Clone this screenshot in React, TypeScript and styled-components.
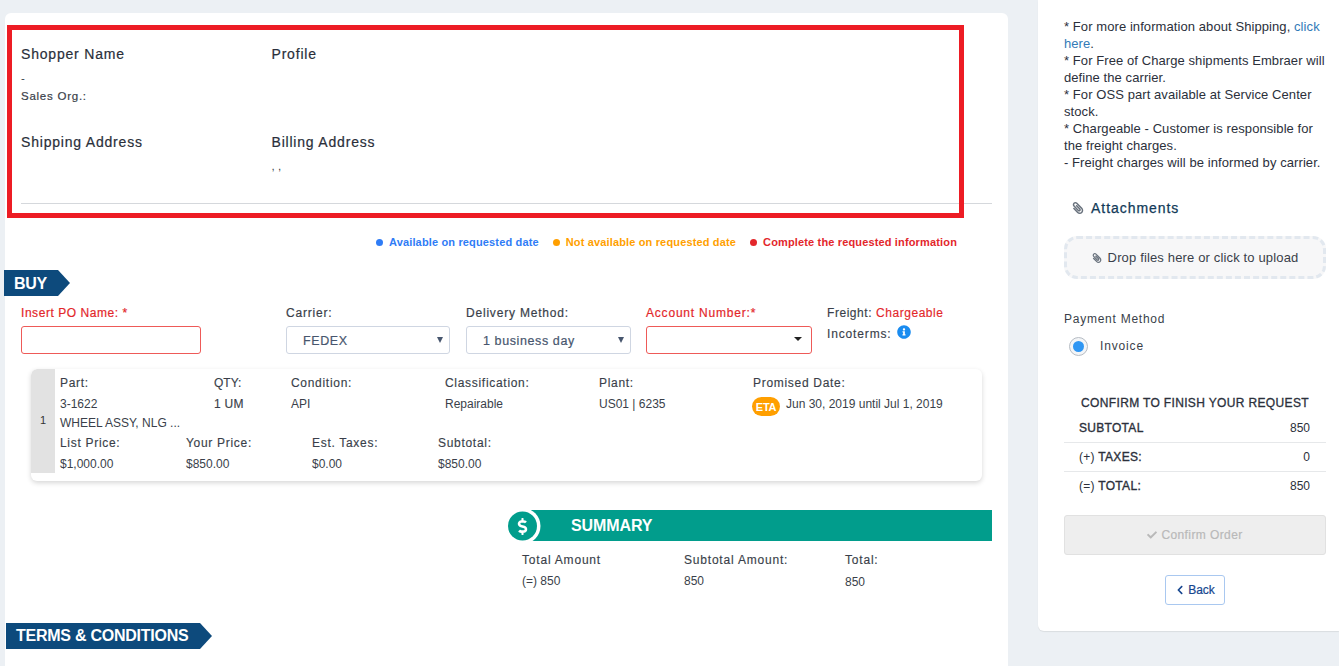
import React from 'react'
import styled, { createGlobalStyle } from 'styled-components'
import { FaCheck, FaChevronLeft, FaDollarSign, FaInfoCircle, FaPaperclip } from 'react-icons/fa'

const GlobalStyle = createGlobalStyle`
  html, body {
    margin: 0;
    padding: 0;
    height: 666px;
    overflow: hidden;
    background: #ecf0f4;
    font-family: "Liberation Sans", Arial, sans-serif;
    color: #2b303b;
  }
  * { box-sizing: border-box; }
`

const Page = styled.div`
  display: flex;
  align-items: flex-start;
  height: 666px;
  overflow: hidden;
  padding-left: 5px;
`

const MainCard = styled.main`
  position: relative;
  width: 1003px;
  height: 653px;
  margin-top: 13px;
  flex-shrink: 0;
  background: #fff;
  border-radius: 6px 6px 0 0;
  padding: 29px 16px 0;
`

const Highlight = styled.div`
  position: absolute;
  left: 2px;
  top: 12px;
  width: 957px;
  height: 193px;
  border: 5px solid #ed1c24;
  pointer-events: none;
`

const InfoGrid = styled.section`
  display: grid;
  grid-template-columns: 250.5px 1fr;
  grid-template-rows: 88px 62px;
  border-bottom: 1px solid #d5d8dc;
  height: 162px;
`

const InfoBlock = styled.div``

const InfoTitle = styled.div`
  font-size: 14px;
  line-height: 24px;
  color: #2a2f3a;
  letter-spacing: 0.8px;
  -webkit-text-stroke: 0.2px #2a2f3a;
`

const InfoText = styled.div`
  font-size: 11.5px;
  line-height: 18px;
  color: #3a3f4a;
  padding-top: 3px;
`

const SalesOrg = styled.div`
  font-size: 11.5px;
  line-height: 18px;
  color: #3a3f4a;
  letter-spacing: 0.75px;
  -webkit-text-stroke: 0.2px #3a3f4a;
`

const Legend = styled.div`
  display: flex;
  justify-content: flex-end;
  gap: 14px;
  margin-top: 30px;
  padding-right: 35px;
  height: 16px;
  align-items: center;
`

const LegendItem = styled.span<{ $color: string }>`
  display: flex;
  align-items: center;
  gap: 6px;
  font-size: 11px;
  font-weight: 700;
  letter-spacing: 0.15px;
  color: ${p => p.$color};
  &::before {
    content: '';
    width: 7px;
    height: 7px;
    border-radius: 50%;
    background: ${p => p.$color};
  }
`

const SectionTag = styled.h2<{ $width: number; $shift: number }>`
  display: flex;
  align-items: center;
  width: ${p => p.$width}px;
  height: 26px;
  margin: 0 0 0 ${p => p.$shift}px;
  padding-left: 10px;
  background: #0d4a7c;
  color: #fff;
  font-size: 16px;
  font-weight: 700;
  letter-spacing: -0.25px;
  clip-path: polygon(0 0, calc(100% - 12px) 0, 100% 50%, calc(100% - 12px) 100%, 0 100%);
`

const BuyTag = styled(SectionTag)`
  margin-top: 20px;
  padding-top: 1px;
`

const TermsTag = styled(SectionTag)`
  margin-top: 31px;
`

const FormRow = styled.div`
  display: grid;
  grid-template-columns: 265px 180px 180px 181px 1fr;
  margin-top: 6px;
  height: 67px;
`

const Field = styled.div``

const FieldLabel = styled.label<{ $error?: boolean; $spacing?: number }>`
  display: block;
  font-size: 12px;
  line-height: 22px;
  height: 22px;
  letter-spacing: ${p => p.$spacing ?? 0.8}px;
  color: ${p => (p.$error ? '#e3272b' : '#3a3f4a')};
  -webkit-text-stroke: 0.2px ${p => (p.$error ? '#e3272b' : '#3a3f4a')};
`

const InputBox = styled.div`
  width: 180px;
  height: 28px;
  margin-top: 2px;
  border: 1px solid #ee5a58;
  border-radius: 3px;
`

const SelectBox = styled.div<{ $error?: boolean; $width: number }>`
  position: relative;
  display: flex;
  align-items: center;
  width: ${p => p.$width}px;
  height: 28px;
  margin-top: 2px;
  padding: 1px 0 0 16px;
  border: 1px solid ${p => (p.$error ? '#ee5a58' : '#cfd6e2')};
  border-radius: 3px;
  font-size: 12.5px;
  letter-spacing: 0.6px;
  color: #47566e;
  -webkit-text-stroke: 0.2px #47566e;
`

const SelectArrow = styled.span<{ $dark?: boolean }>`
  position: absolute;
  right: ${p => (p.$dark ? 9 : 6)}px;
  top: 10px;
  width: 0;
  height: 0;
  border-left: ${p => (p.$dark ? 4 : 3)}px solid transparent;
  border-right: ${p => (p.$dark ? 4 : 3)}px solid transparent;
  border-top: ${p => (p.$dark ? 4 : 6)}px solid ${p => (p.$dark ? '#222' : '#47566e')};
`

const FreightCol = styled.div`
  font-size: 12px;
  color: #3a3f4a;
  letter-spacing: 0.55px;
  -webkit-text-stroke: 0.15px currentColor;
`

const FreightLine = styled.div`
  line-height: 22px;
  height: 22px;
`

const Incoterms = styled.div`
  display: flex;
  align-items: center;
  gap: 5px;
  line-height: 20px;
  height: 20px;
  letter-spacing: 0.85px;
  svg {
    color: #1a8cf0;
    font-size: 14px;
    margin-top: -4px;
  }
`

const RedText = styled.span`
  color: #e3272b;
`

const ItemCard = styled.article`
  display: flex;
  width: 951px;
  height: 112px;
  margin: 0 0 0 10px;
  background: #fff;
  border-radius: 6px;
  box-shadow: 0 2px 5px rgba(0, 0, 0, 0.16);
  overflow: hidden;
`

const ItemIndex = styled.div`
  display: flex;
  align-items: center;
  justify-content: center;
  width: 24px;
  padding-bottom: 2px;
  height: 104px;
  background: #e2e2e2;
  font-size: 11px;
  color: #333;
  border-radius: 6px 0 0 0;
`

const ItemBody = styled.div`
  flex: 1;
  padding: 4px 0 0 5px;
`

const ItemTop = styled.div`
  display: grid;
  grid-template-columns: 154px 77px 154px 154px 154px 1fr;
  height: 60px;
`

const ItemBottom = styled.div`
  display: grid;
  grid-template-columns: repeat(4, 126px);
`

const ItemCell = styled.div``

const ItemLabel = styled.div<{ $tight?: boolean }>`
  font-size: 12px;
  line-height: 21px;
  color: #3a3f4a;
  letter-spacing: ${p => (p.$tight ? 0 : 0.7)}px;
  -webkit-text-stroke: 0.15px #3a3f4a;
`

const ItemValue = styled.div`
  font-size: 12px;
  line-height: 20px;
  color: #3a3f4a;
`

const ItemDescription = styled(ItemValue)`
  margin-top: -1px;
`

const QtyValue = styled(ItemValue)`
  letter-spacing: 0.3px;
  -webkit-text-stroke: 0.15px #3a3f4a;
`

const EtaRow = styled.div`
  display: flex;
  align-items: flex-start;
  gap: 6px;
  font-size: 12px;
  line-height: 20px;
  color: #3a3f4a;
`

const EtaBadge = styled.span`
  display: inline-flex;
  align-items: center;
  justify-content: center;
  width: 28px;
  height: 19px;
  margin: 3px 0 0 -1px;
  border-radius: 10px;
  background: #ff9f00;
  color: #fff;
  font-size: 11px;
  font-weight: 700;
  letter-spacing: -0.3px;
`

const SummarySection = styled.section`
  margin: 29px 0 0 487px;
  width: 484px;
`

const SummaryBar = styled.div`
  position: relative;
  display: flex;
  align-items: center;
  height: 31px;
  padding-left: 63px;
  background: #019d8c;
  color: #fff;
  font-size: 16px;
  font-weight: 700;
  letter-spacing: -0.1px;
`

const DollarBadge = styled.span`
  position: absolute;
  left: 0;
  top: 0;
  display: flex;
  align-items: center;
  justify-content: center;
  width: 29px;
  height: 31px;
  padding-top: 1px;
  color: #fff;
  font-size: 17px;
`

const BadgeShape = styled.svg`
  position: absolute;
  left: 0;
  top: 0;
  width: 34px;
  height: 31px;
`

const DollarIcon = styled(FaDollarSign)`
  position: relative;
`

const SummaryCols = styled.div`
  display: grid;
  grid-template-columns: 162px 161px 1fr;
  padding: 9px 0 0 14px;
`

const SummaryLabel = styled.div`
  font-size: 12px;
  line-height: 21px;
  color: #3a3f4a;
  letter-spacing: 0.8px;
  -webkit-text-stroke: 0.15px #3a3f4a;
`

const SummaryValue = styled.div<{ $drop?: boolean }>`
  font-size: 12px;
  line-height: 20px;
  color: #3a3f4a;
  padding-top: ${p => (p.$drop ? 1 : 0)}px;
`

const Sidebar = styled.aside`
  width: 301px;
  height: 631px;
  margin-left: 30px;
  flex-shrink: 0;
  background: #fff;
  border-radius: 0 0 0 6px;
  box-shadow: 0 1px 1px rgba(0, 0, 0, 0.08);
  padding: 18px 13px 0 26px;
`

const Notes = styled.div`
  font-size: 13px;
  line-height: 17px;
  letter-spacing: 0.08px;
  color: #2b303b;
`

const NoteLink = styled.a`
  color: #337ab7;
`

const AttachHead = styled.div`
  display: flex;
  align-items: center;
  gap: 7px;
  margin: 25px 0 0 8px;
  height: 24px;
  font-size: 14px;
  letter-spacing: 0.95px;
  color: #123a58;
  -webkit-text-stroke: 0.25px #123a58;
`

const ClipIcon = styled(FaPaperclip)<{ $size: number }>`
  color: #69727d;
  font-size: ${p => p.$size}px;
  transform: scaleX(-1);
`

const DropZone = styled.div`
  display: flex;
  align-items: center;
  justify-content: center;
  gap: 6px;
  height: 43px;
  margin-top: 16px;
  border: 3px dashed #e2e8ef;
  border-radius: 13px;
  background: #f7f7f8;
  font-size: 13px;
  letter-spacing: 0.15px;
  color: #3a3f4a;
`

const PayTitle = styled.div`
  margin-top: 31px;
  font-size: 12px;
  line-height: 18px;
  letter-spacing: 0.75px;
  color: #3a3f4a;
`

const RadioRow = styled.div`
  display: flex;
  align-items: center;
  gap: 12px;
  margin: 8px 0 0 5px;
  height: 20px;
  font-size: 12px;
  letter-spacing: 0.85px;
  color: #3a3f4a;
`

const RadioOuter = styled.span`
  display: flex;
  align-items: center;
  justify-content: center;
  width: 19px;
  height: 19px;
  border: 1px solid #b6bcc4;
  border-radius: 50%;
  background: #f3f5f7;
  &::after {
    content: '';
    width: 11px;
    height: 11px;
    border-radius: 50%;
    background: #2f96f3;
  }
`

const ConfirmTitle = styled.div`
  margin-top: 38px;
  text-align: center;
  font-size: 12px;
  line-height: 18px;
  letter-spacing: 0.35px;
  color: #2b303b;
  -webkit-text-stroke: 0.3px #2b303b;
`

const Totals = styled.div`
  margin-top: 2px;
`

const TotalRow = styled.div`
  display: flex;
  justify-content: space-between;
  align-items: center;
  height: 29px;
  padding: 0 16px 0 15px;
  font-size: 12px;
  color: #2b303b;
  border-bottom: 1px solid #e6e8ea;
  &:last-child {
    height: 28px;
    border-bottom: none;
  }
`

const TotalLabel = styled.span`
  letter-spacing: 0.3px;
  -webkit-text-stroke: 0.35px #2b303b;
`

const TotalPrefix = styled.span`
  -webkit-text-stroke: 0;
`

const ConfirmButton = styled.button`
  display: flex;
  align-items: center;
  justify-content: center;
  gap: 4px;
  width: 100%;
  height: 40px;
  margin-top: 15px;
  border: 1px solid #e1e1e1;
  border-radius: 3px;
  background: #eeeeee;
  color: #b9b9b9;
  font-family: inherit;
  font-size: 12px;
  letter-spacing: 0.4px;
  -webkit-text-stroke: 0.2px #b9b9b9;
  svg {
    font-size: 10px;
  }
`

const BackButton = styled.button`
  display: flex;
  align-items: center;
  justify-content: center;
  gap: 3px;
  width: 60px;
  height: 30px;
  margin: 20px auto 0;
  border: 1px solid #a9c8f0;
  border-radius: 3px;
  background: #fff;
  color: #16468f;
  font-family: inherit;
  font-size: 12px;
  -webkit-text-stroke: 0.2px #16468f;
  svg {
    font-size: 10px;
  }
`

const items = {
  top: [
    { label: 'Classification:', value: 'Repairable' },
    { label: 'Plant:', value: 'US01 | 6235' },
  ],
  bottom: [
    { label: 'List Price:', value: '$1,000.00' },
    { label: 'Your Price:', value: '$850.00' },
    { label: 'Est. Taxes:', value: '$0.00' },
    { label: 'Subtotal:', value: '$850.00' },
  ],
}

export default function App() {
  return (
    <Page>
      <GlobalStyle />
      <MainCard>
        <Highlight />
        <InfoGrid>
          <InfoBlock>
            <InfoTitle>Shopper Name</InfoTitle>
            <InfoText>-</InfoText>
            <SalesOrg>Sales Org.:</SalesOrg>
          </InfoBlock>
          <InfoBlock>
            <InfoTitle>Profile</InfoTitle>
          </InfoBlock>
          <InfoBlock>
            <InfoTitle>Shipping Address</InfoTitle>
          </InfoBlock>
          <InfoBlock>
            <InfoTitle>Billing Address</InfoTitle>
            <InfoText>, ,</InfoText>
          </InfoBlock>
        </InfoGrid>

        <Legend>
          <LegendItem $color="#2f7cf6">Available on requested date</LegendItem>
          <LegendItem $color="#ff9f00">Not available on requested date</LegendItem>
          <LegendItem $color="#e3272b">Complete the requested information</LegendItem>
        </Legend>

        <BuyTag $width={66} $shift={-17}>BUY</BuyTag>

        <FormRow>
          <Field>
            <FieldLabel $error $spacing={0.55}>Insert PO Name: *</FieldLabel>
            <InputBox />
          </Field>
          <Field>
            <FieldLabel>Carrier:</FieldLabel>
            <SelectBox $width={164}>
              FEDEX
              <SelectArrow />
            </SelectBox>
          </Field>
          <Field>
            <FieldLabel>Delivery Method:</FieldLabel>
            <SelectBox $width={165}>
              1 business day
              <SelectArrow />
            </SelectBox>
          </Field>
          <Field>
            <FieldLabel $error>Account Number:*</FieldLabel>
            <SelectBox $width={166} $error>
              <SelectArrow $dark />
            </SelectBox>
          </Field>
          <FreightCol>
            <FreightLine>
              Freight: <RedText>Chargeable</RedText>
            </FreightLine>
            <Incoterms>
              Incoterms: <FaInfoCircle />
            </Incoterms>
          </FreightCol>
        </FormRow>

        <ItemCard>
          <ItemIndex>1</ItemIndex>
          <ItemBody>
            <ItemTop>
              <ItemCell>
                <ItemLabel>Part:</ItemLabel>
                <ItemValue>3-1622</ItemValue>
                <ItemDescription>WHEEL ASSY, NLG ...</ItemDescription>
              </ItemCell>
              <ItemCell>
                <ItemLabel $tight>QTY:</ItemLabel>
                <QtyValue>1 UM</QtyValue>
              </ItemCell>
              <ItemCell>
                <ItemLabel>Condition:</ItemLabel>
                <ItemValue>API</ItemValue>
              </ItemCell>
              {items.top.map(cell => (
                <ItemCell key={cell.label}>
                  <ItemLabel>{cell.label}</ItemLabel>
                  <ItemValue>{cell.value}</ItemValue>
                </ItemCell>
              ))}
              <ItemCell>
                <ItemLabel>Promised Date:</ItemLabel>
                <EtaRow>
                  <EtaBadge>ETA</EtaBadge>
                  Jun 30, 2019 until Jul 1, 2019
                </EtaRow>
              </ItemCell>
            </ItemTop>
            <ItemBottom>
              {items.bottom.map(cell => (
                <ItemCell key={cell.label}>
                  <ItemLabel>{cell.label}</ItemLabel>
                  <ItemValue>{cell.value}</ItemValue>
                </ItemCell>
              ))}
            </ItemBottom>
          </ItemBody>
        </ItemCard>

        <SummarySection>
          <SummaryBar>
            <BadgeShape viewBox="0 0 34 31">
              <rect x="0" y="0" width="15" height="31" fill="#fff" />
              <circle cx="14.5" cy="16" r="18" fill="#fff" />
              <circle cx="14.5" cy="16" r="14.5" fill="#019d8c" />
            </BadgeShape>
            <DollarBadge>
              <DollarIcon />
            </DollarBadge>
            SUMMARY
          </SummaryBar>
          <SummaryCols>
            <ItemCell>
              <SummaryLabel>Total Amount</SummaryLabel>
              <SummaryValue>(=) 850</SummaryValue>
            </ItemCell>
            <ItemCell>
              <SummaryLabel>Subtotal Amount:</SummaryLabel>
              <SummaryValue>850</SummaryValue>
            </ItemCell>
            <ItemCell>
              <SummaryLabel>Total:</SummaryLabel>
              <SummaryValue $drop>850</SummaryValue>
            </ItemCell>
          </SummaryCols>
        </SummarySection>

        <TermsTag $width={206} $shift={-15}>TERMS &amp; CONDITIONS</TermsTag>
      </MainCard>

      <Sidebar>
        <Notes>
          * For more information about Shipping, <NoteLink>click here</NoteLink>.
          <br />* For Free of Charge shipments Embraer will define the carrier.
          <br />* For OSS part available at Service Center stock.
          <br />* Chargeable - Customer is responsible for the freight charges.
          <br />- Freight charges will be informed by carrier.
        </Notes>

        <AttachHead>
          <ClipIcon $size={12} />
          Attachments
        </AttachHead>
        <DropZone>
          <ClipIcon $size={10} />
          Drop files here or click to upload
        </DropZone>

        <PayTitle>Payment Method</PayTitle>
        <RadioRow>
          <RadioOuter />
          Invoice
        </RadioRow>

        <ConfirmTitle>CONFIRM TO FINISH YOUR REQUEST</ConfirmTitle>
        <Totals>
          <TotalRow>
            <TotalLabel>SUBTOTAL</TotalLabel>
            850
          </TotalRow>
          <TotalRow>
            <TotalLabel>
              <TotalPrefix>(+)</TotalPrefix> TAXES:
            </TotalLabel>
            0
          </TotalRow>
          <TotalRow>
            <TotalLabel>
              <TotalPrefix>(=)</TotalPrefix> TOTAL:
            </TotalLabel>
            850
          </TotalRow>
        </Totals>

        <ConfirmButton disabled>
          <FaCheck />
          Confirm Order
        </ConfirmButton>
        <BackButton>
          <FaChevronLeft />
          Back
        </BackButton>
      </Sidebar>
    </Page>
  )
}
